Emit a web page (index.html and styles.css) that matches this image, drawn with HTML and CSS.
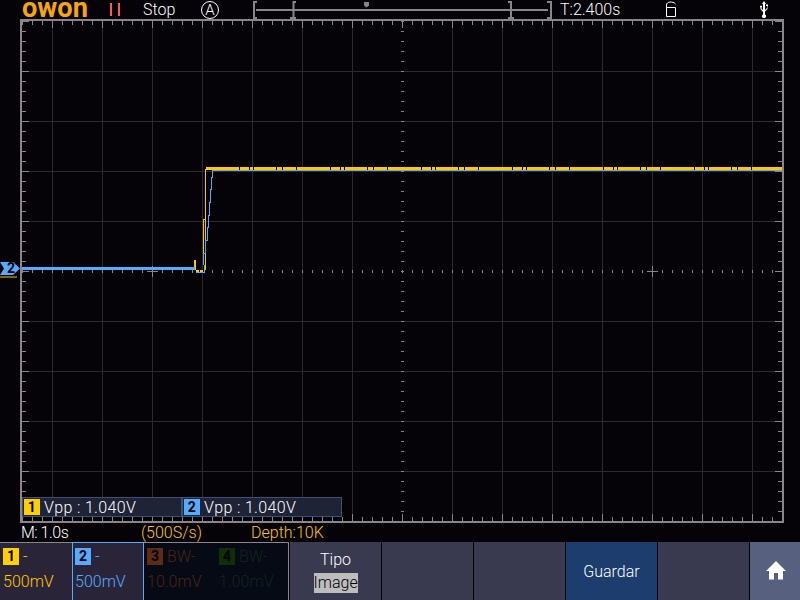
FILE: index.html
```html
<!DOCTYPE html>
<html lang="en">

<head>
    <meta charset="UTF-8">
    <meta name="viewport" content="width=device-width, initial-scale=1.0">
    <title>Oscilloscope</title>
    <link rel="stylesheet" href="styles.css">
</head>

<body>
    <div class="screen">
        <!-- Top bar -->
        <div class="topbar">
            <svg class="logo" width="68" height="19" viewBox="0 0 68 19">
                <text x="0" y="17" textLength="66" lengthAdjust="spacingAndGlyphs">owon</text>
            </svg>
            <span class="run-icon"><i></i><i></i></span>
            <span class="run-state">Stop</span>
            <span class="auto-badge">A</span>
            <svg class="timeline" width="302" height="19" viewBox="0 0 302 19">
                <path d="M7 2H4V18H7M46 2H43.500V18H46M40 18H43.500M258 2H261V18H258M261 18H264M297 2H301V18H297" fill="none" stroke="#8b858b" stroke-width="2" />
                <rect x="6" y="9" width="292" height="2" fill="#8b858b" />
                <path d="M114 2H119V5.500L116.500 7.500L114 5.500Z" fill="#8b858b" />
            </svg>
            <span class="trigger-time">T:2.400s</span>
            <svg class="lock-icon" width="12" height="17" viewBox="0 0 12 17">
                <path d="M1.500 6.500H10.500V15.500H1.500ZM1.500 6.500V4C1.500 .5 8 0 10.500 3" fill="none" stroke="#fff" />
            </svg>
            <svg class="usb-icon" width="8" height="17" viewBox="0 0 8 17">
                <path d="M4 0L6 3H5V9L7 7V5H6V3.500H8V5H7.500V8L5 10.500V13.500A2 2 0 1 1 3 13.500V11L.5 8V6.500A1 1 0 1 1 1.500 6.500V7.500L3 9V3H2Z" fill="#fff" />
            </svg>
        </div>

        <!-- Grid and traces -->
        <div class="plot">
            <svg class="grid" width="764" height="504" viewBox="0 0 764 504">
                <defs>
                    <pattern id="xtick" x="2" y="0" width="10" height="504" patternUnits="userSpaceOnUse">
                        <rect x="0" y="0" width="1" height="504" fill="#8b858b" />
                    </pattern>
                    <pattern id="ytick" x="0" y="2" width="764" height="10" patternUnits="userSpaceOnUse">
                        <rect x="0" y="0" width="764" height="1" fill="#8b858b" />
                    </pattern>
                    <pattern id="xmajor" x="32" y="0" width="50" height="504" patternUnits="userSpaceOnUse">
                        <rect x="0" y="0" width="1" height="504" fill="#8b858b" />
                    </pattern>
                    <pattern id="ymajor" x="0" y="2" width="764" height="50" patternUnits="userSpaceOnUse">
                        <rect x="0" y="0" width="764" height="1" fill="#8b858b" />
                    </pattern>
                </defs>

                <!-- Divisions, no line on the centre axes -->
                <path class="division" d="M32.500 2V502M82.500 2V502M132.500 2V502M182.500 2V502M232.500 2V502M282.500 2V502M332.500 2V502M432.500 2V502M482.500 2V502M532.500 2V502M582.500 2V502M632.500 2V502M682.500 2V502M732.500 2V502M2 52.500H762M2 102.500H762M2 152.500H762M2 202.500H762M2 302.500H762M2 352.500H762M2 402.500H762M2 452.500H762" />

                <!-- Edge and centre ticks -->
                <rect x="2" y="2" width="760" height="4" fill="url(#xtick)" />
                <rect x="2" y="498" width="760" height="4" fill="url(#xtick)" />
                <rect x="2" y="2" width="760" height="7" fill="url(#xmajor)" />
                <rect x="2" y="495" width="760" height="7" fill="url(#xmajor)" />
                <rect x="2" y="2" width="4" height="500" fill="url(#ytick)" />
                <rect x="758" y="2" width="4" height="500" fill="url(#ytick)" />
                <rect x="2" y="2" width="7" height="500" fill="url(#ymajor)" />
                <rect x="755" y="2" width="7" height="500" fill="url(#ymajor)" />
                <rect x="2" y="251" width="760" height="3" fill="url(#xtick)" />
                <rect x="381" y="2" width="3" height="500" fill="url(#ytick)" />
                <path class="cross" d="M127 252.500H138M132.500 247V258M627 252.500H638M632.500 247V258" />

                <!-- Frame -->
                <rect x="1" y="1" width="762" height="502" fill="none" stroke="#8b858b" stroke-width="2" />

                <!-- CH1 trace -->
                <path d="M175 241V251" fill="none" stroke="#ffc800" stroke-width="2" />
                <path d="M176 251.500H183" fill="none" stroke="#ffc800" stroke-width="2" stroke-dasharray="3 1" />
                <path d="M185.500 251V150M183.500 244V200.500H185.500" fill="none" stroke="#ffc800" stroke-width="1" />
                <!-- CH2 trace -->
                <path d="M2 249.500H175" fill="none" stroke="#55acff" stroke-width="3" />
                <path d="M176 253H184V246M183.500 246V234H185.500V221H187V208H188V196H189.500V183H190.500V170H191.500V158H192.500V151.500H762" fill="none" stroke="#55acff" stroke-width="1" />
                <!-- CH1 flat part lies over CH2 -->
                <path d="M186 149.500H762" fill="none" stroke="#ffc800" stroke-width="3" stroke-dasharray="33 1 9 1 3 1 22 1 5 1 13 1" />
            </svg>

            <!-- Channel marker -->
            <svg class="ch-marker" width="20" height="17" viewBox="0 0 20 17">
                <path d="M0 0H13L20 6.500L13 13H0L4 6.500Z" fill="#55acff" />
                <path d="M0 15H17" stroke="#ffc800" />
            </svg>
            <span class="ch-marker-num">2</span>

            <div class="measures">
                <div class="measure"><b class="tag tag-ch1">1</b>Vpp : 1.040V</div>
                <div class="measure"><b class="tag tag-ch2">2</b>Vpp : 1.040V</div>
            </div>
        </div>

        <!-- Status line -->
        <div class="status">
            <span class="status-time">M: 1.0s</span>
            <span class="status-rate">(500S/s)</span>
            <span class="status-depth">Depth:10K</span>
        </div>

        <!-- Bottom menu -->
        <div class="menu">
            <div class="channels">
                <div class="channel ch1">
                    <div class="channel-top"><b class="tag tag-ch1">1</b>-</div>
                    <div class="channel-value">500mV</div>
                </div>
                <div class="channel ch2">
                    <div class="channel-top"><b class="tag tag-ch2">2</b>-</div>
                    <div class="channel-value">500mV</div>
                </div>
                <div class="channel ch3">
                    <div class="channel-top"><b class="tag tag-ch3">3</b>BW-</div>
                    <div class="channel-value">10.0mV</div>
                </div>
                <div class="channel ch4">
                    <div class="channel-top"><b class="tag tag-ch4">4</b>BW-</div>
                    <div class="channel-value">1.00mV</div>
                </div>
            </div>
            <div class="softkey softkey-type">
                <span>Tipo</span>
                <span class="selected">Image</span>
            </div>
            <div class="softkey"></div>
            <div class="softkey"></div>
            <div class="softkey softkey-active">Guardar</div>
            <div class="softkey"></div>
            <div class="softkey softkey-home">
                <svg width="24" height="20" viewBox="0 1 24 20">
                    <path d="M13 1L23 11H20V19.500H15V13H11V19.500H6V11H3Z" fill="#fff" />
                </svg>
            </div>
        </div>
    </div>
</body>

</html>
```

FILE: styles.css
```css
* {
    box-sizing: border-box;
}

body {
    margin: 0;
    background-color: #050208;
    font-family: Roboto, "Liberation Sans", sans-serif;
    font-weight: 300;
    font-size: 16px;
    color: #fff;
}

.screen {
    width: 800px;
    height: 600px;
    overflow: hidden;
    display: flex;
    flex-direction: column;
}

/* Top bar */
.topbar {
    height: 19px;
    display: flex;
    align-items: center;
}

.logo {
    margin-left: 22px;
    flex-shrink: 0;
    font-size: 28px;
    font-weight: 700;
    fill: #f5a60a;
}

.run-icon {
    width: 10px;
    height: 13px;
    margin-left: 20px;
    display: flex;
    justify-content: space-between;
}

.run-icon i {
    width: 2px;
    background-color: #ff5a5a;
}

.run-state {
    width: 34px;
    margin-left: 23px;
}

.auto-badge {
    width: 18px;
    height: 18px;
    margin-left: 24px;
    border: 1px solid #fff;
    border-radius: 50%;
    font-size: 15px;
    line-height: 16px;
    text-align: center;
}

.timeline {
    margin-left: 31px;
    flex-shrink: 0;
}

.trigger-time {
    width: 62px;
    margin-left: 8px;
}

.lock-icon {
    margin-left: 43px;
}

.usb-icon {
    margin-left: 83px;
}

/* Grid and traces */
.plot {
    height: 504px;
    margin-left: 20px;
    position: relative;
}

.grid {
    display: block;
    shape-rendering: crispEdges;
}

.division {
    fill: none;
    stroke: #2c2a2c;
}

.cross {
    fill: none;
    stroke: #8b858b;
}

.ch-marker {
    position: absolute;
    left: -20px;
    top: 243px;
}

.ch-marker-num {
    position: absolute;
    left: -13px;
    top: 241px;
    font-size: 14px;
    font-weight: 700;
    color: #000;
}

.measures {
    position: absolute;
    left: 2px;
    top: 478px;
    display: flex;
}

.measure {
    width: 160px;
    height: 20px;
    display: flex;
    align-items: center;
    padding-left: 1px;
    background-color: #1f2336;
    border: 1px solid #3a5178;
    letter-spacing: 0.35px;
}

.tag {
    width: 16px;
    height: 16px;
    margin-right: 4px;
    font-size: 14px;
    font-weight: 700;
    line-height: 16px;
    text-align: center;
    color: #000;
}

.tag-ch1 {
    background-color: #ffd000;
}

.tag-ch2 {
    background-color: #55acff;
}

.tag-ch3 {
    background-color: #5c2c18;
}

.tag-ch4 {
    background-color: #0d3008;
}

/* Status line */
.status {
    height: 19px;
    display: flex;
    align-items: center;
    color: #ffc800;
}

.status-time {
    margin-left: 21px;
    width: 120px;
    letter-spacing: -0.5px;
    color: #fff;
}

.status-rate {
    width: 110px;
}

/* Bottom menu */
.menu {
    height: 58px;
    display: flex;
}

.channels {
    width: 289px;
    display: flex;
    background-color: #050a14;
    border-top: 1px solid #8b858b;
    border-right: 1px solid #8b858b;
}

.channel {
    width: 72px;
    padding: 5px 0 0 3px;
}

.channel-top {
    display: flex;
    align-items: center;
    height: 17px;
}

.channel-top .tag {
    height: 17px;
}

.channel-value {
    margin-top: 7px;
}

.ch1 {
    background-color: #2a2438;
    color: #ffc800;
}

.ch2 {
    margin-top: -1px;
    padding: 5px 0 0 2px;
    background-color: #2a2438;
    border: 1px solid #55acff;
    border-bottom: 0;
    color: #55acff;
}

.ch3 {
    color: #4a2418;
}

.ch4 {
    color: #12261a;
}

.softkey {
    width: 92px;
    border-left: 1px solid #050208;
    background-color: #39394f;
    display: flex;
    flex-direction: column;
    align-items: center;
    justify-content: center;
}

.softkey-type {
    gap: 4px;
}

.selected {
    width: 44px;
    height: 20px;
    line-height: 20px;
    text-align: center;
    background-color: #bdbdbd;
    color: #000;
}

.softkey-active {
    background-color: #1c3d6e;
}

.softkey-home {
    width: 51px;
    background-color: #57607f;
}
```
